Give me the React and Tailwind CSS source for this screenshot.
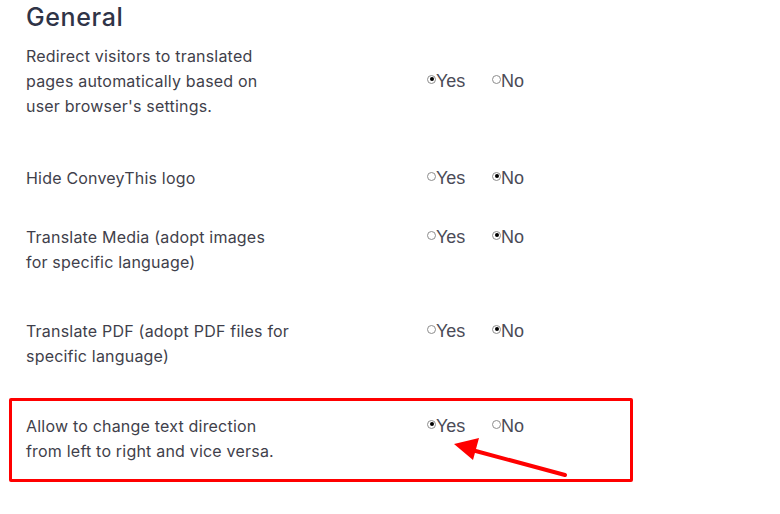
import React, { useState } from "react";

const ROWS = [
  { id: "redirect", label: "Redirect visitors to translated pages automatically based on user browser's settings.", value: "yes", align: "center", h: "h-[122px]" },
  { id: "logo", label: "Hide ConveyThis logo", value: "no", align: "start", h: "h-[59px]" },
  { id: "media", label: "Translate Media (adopt images for specific language)", value: "no", align: "start", h: "h-[94px]" },
  { id: "pdf", label: "Translate PDF (adopt PDF files for specific language)", value: "no", align: "start", h: "h-[79px]" },
];

function Radio({ checked, label, onClick }) {
  return (
    <button onClick={onClick} className="flex items-center cursor-pointer">
      <span className="w-[9px] h-[9px] -mt-[5px] rounded-full border border-[#8d8d8d] bg-white flex items-center justify-center">
        {checked && <span className="w-[4px] h-[4px] rounded-full bg-black" />}
      </span>
      <span className="text-[18px] leading-[25px] text-[#4b4b57] font-['Liberation_Sans',Arial,sans-serif]">{label}</span>
    </button>
  );
}

function YesNo({ value, onChange }) {
  return (
    <div className="flex items-center">
      <div className="w-[65px]">
        <Radio checked={value === "yes"} label="Yes" onClick={() => onChange("yes")} />
      </div>
      <Radio checked={value === "no"} label="No" onClick={() => onChange("no")} />
    </div>
  );
}

function Row({ label, value, onChange, align }) {
  return (
    <div className={`flex ${align === "center" ? "items-center" : "items-start"}`}>
      <p className="w-[264px] text-[16px] leading-[25px] tracking-[0.2px] text-[#3f3f4b]">{label}</p>
      <div className="ml-[137px]">
        <YesNo value={value} onChange={onChange} />
      </div>
    </div>
  );
}

export default function App() {
  const [vals, setVals] = useState(() => {
    const v = {};
    ROWS.forEach(r => { v[r.id] = r.value; });
    v.direction = "yes";
    return v;
  });
  const set = (id) => (val) => setVals(prev => ({ ...prev, [id]: val }));

  return (
    <div className="relative w-[780px] h-[514px] overflow-hidden bg-white font-['Inter','Noto_Sans',sans-serif]">
      <div className="pl-[26px]">
        <h2 className="text-[25px] leading-[34px] font-medium text-[#2f3447] tracking-[0.6px]">General</h2>
        <div className="pt-[10px]">
          {ROWS.map(r => (
            <div key={r.id} className={r.h}>
              <Row label={r.label} value={vals[r.id]} onChange={set(r.id)} align={r.align} />
            </div>
          ))}
        </div>
      </div>

      {/* highlighted row */}
      <div className="ml-[9px] w-[624px] h-[84px] border-[3px] border-[#ff0000] rounded-[2px] pl-[14px] pt-[13px]">
        <Row
          label="Allow to change text direction from left to right and vice versa."
          value={vals.direction}
          onChange={set("direction")}
          align="start"
        />
      </div>

      {/* annotation arrow */}
      <svg className="absolute left-0 top-0 pointer-events-none" width="780" height="514">
        <line x1="565" y1="475" x2="472" y2="450" stroke="#ff0000" strokeWidth="4" strokeLinecap="round" />
        <polygon points="454,444 479,438 473,460" fill="#ff0000" />
      </svg>
    </div>
  );
}
